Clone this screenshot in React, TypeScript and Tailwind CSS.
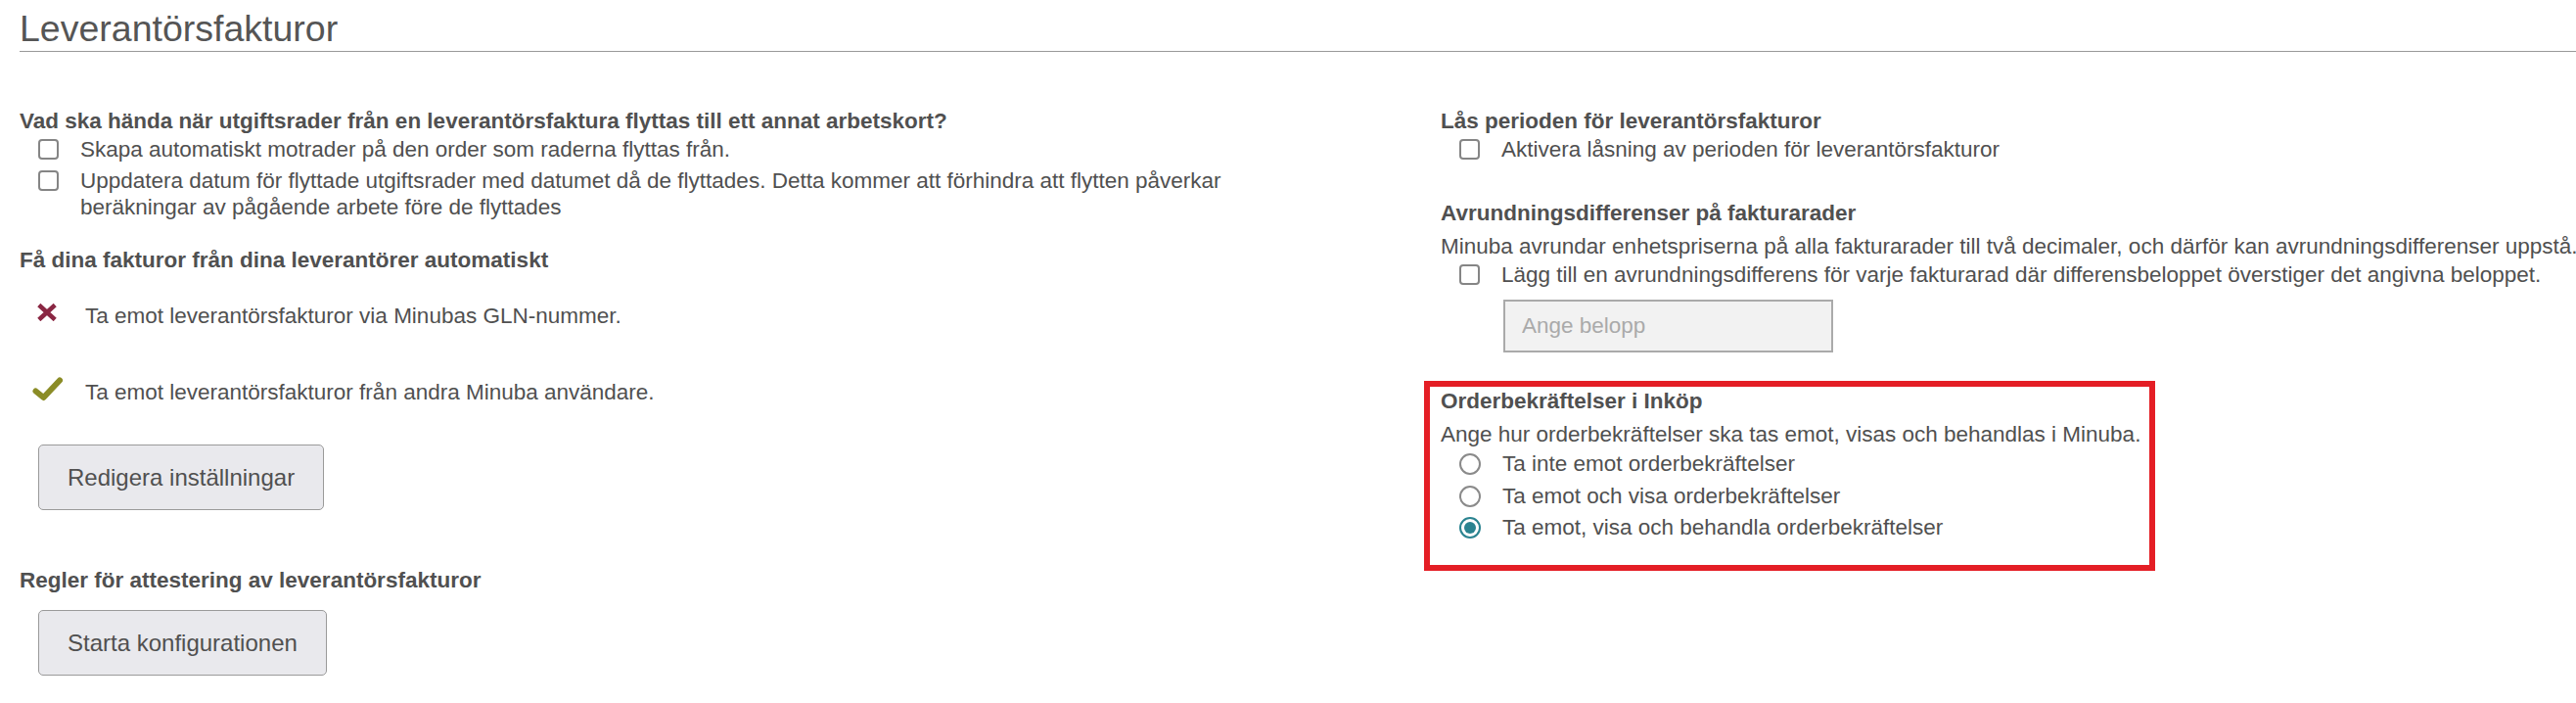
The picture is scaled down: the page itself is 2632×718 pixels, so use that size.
import type { ReactNode } from "react";

const Checkbox = () => (
  <span className="mt-[3px] ml-[19px] mr-[22px] h-[21px] w-[21px] shrink-0 rounded-[4px] border-2 border-[#858585] bg-white" />
);

const CheckRow = ({ children, className = "" }: { children: ReactNode; className?: string }) => (
  <div className={`flex items-start ${className}`}>
    <Checkbox />
    <span>{children}</span>
  </div>
);

const Radio = ({ checked }: { checked?: boolean }) =>
  checked ? (
    <span className="mt-[3px] ml-[19px] mr-[22px] flex h-[22px] w-[22px] shrink-0 items-center justify-center rounded-full border-2 border-[#2a8390] bg-white">
      <span className="h-[12px] w-[12px] rounded-full bg-[#2a8390]" />
    </span>
  ) : (
    <span className="mt-[3px] ml-[19px] mr-[22px] h-[22px] w-[22px] shrink-0 rounded-full border-2 border-[#8a8a8a] bg-white" />
  );

const RadioRow = ({ children, checked, className = "" }: { children: ReactNode; checked?: boolean; className?: string }) => (
  <div className={`flex items-start ${className}`}>
    <Radio checked={checked} />
    <span>{children}</span>
  </div>
);

const Heading = ({ children, className = "" }: { children: ReactNode; className?: string }) => (
  <div className={`font-bold ${className}`}>{children}</div>
);

const CrossIcon = () => (
  <svg width="20" height="18" viewBox="0 0 20 18">
    <path d="M1.8 1.5 L18.2 16.5 M18.2 1.5 L1.8 16.5" stroke="#8a2743" strokeWidth="4.6" strokeLinecap="butt" fill="none" />
  </svg>
);

const CheckIcon = () => (
  <svg width="31" height="24" viewBox="0 0 31 24" className="overflow-visible">
    <path d="M3.5 14.5 L11.5 21 L28 3.5" stroke="#8b8c26" strokeWidth="6" strokeLinecap="round" strokeLinejoin="round" fill="none" />
  </svg>
);

const StatusRow = ({ ok, children, className = "" }: { ok?: boolean; children: ReactNode; className?: string }) => (
  <div className={`flex items-start ${className}`}>
    <span className="ml-[12px] mr-[23px] flex h-[20px] w-[32px] shrink-0 items-center justify-center">
      {ok ? <CheckIcon /> : <CrossIcon />}
    </span>
    <span>{children}</span>
  </div>
);

const GrayButton = ({ children, className = "" }: { children: ReactNode; className?: string }) => (
  <button
    type="button"
    className={`ml-[19px] flex h-[67px] items-center self-start rounded-[5px] border border-[#9a9a9a] bg-[#e9e9ed] px-[29px] text-[24px] text-[#505050] ${className}`}
  >
    {children}
  </button>
);

const App = () => {
  return (
    <div className="h-[718px] w-full overflow-hidden bg-white font-['Liberation_Sans',Arial,sans-serif] text-[22.5px] leading-[27px] text-[#505050]">
      <h1 className="ml-5 border-b border-[#9a9a9a] pt-[11px] pb-[3px] text-[37.5px] leading-[37.5px] font-normal text-[#555]">
        Leverantörsfakturor
      </h1>

      <div className="flex pl-5 pt-[57px]">
        <div className="flex w-[1310px] shrink-0 flex-col">
          <Heading>Vad ska hända när utgiftsrader från en leverantörsfaktura flyttas till ett annat arbetskort?</Heading>
          <CheckRow className="mt-[2px]">Skapa automatiskt motrader på den order som raderna flyttas från.</CheckRow>
          <CheckRow className="mt-[5px]">
            Uppdatera datum för flyttade utgiftsrader med datumet då de flyttades. Detta kommer att förhindra att flytten påverkar beräkningar av pågående arbete före de flyttades
          </CheckRow>

          <Heading className="mt-[27px]">Få dina fakturor från dina leverantörer automatiskt</Heading>
          <StatusRow className="mt-[30px]">Ta emot leverantörsfakturor via Minubas GLN-nummer.</StatusRow>
          <StatusRow ok className="mt-[51px]">Ta emot leverantörsfakturor från andra Minuba användare.</StatusRow>

          <GrayButton className="mt-[40px]">Redigera inställningar</GrayButton>

          <Heading className="mt-[58px]">Regler för attestering av leverantörsfakturor</Heading>
          <GrayButton className="mt-[17px]">Starta konfigurationen</GrayButton>
        </div>

        <div className="ml-[142px] flex flex-col whitespace-nowrap">
          <Heading>Lås perioden för leverantörsfakturor</Heading>
          <CheckRow className="mt-[2px]">Aktivera låsning av perioden för leverantörsfakturor</CheckRow>

          <Heading className="mt-[38px]">Avrundningsdifferenser på fakturarader</Heading>
          <div className="mt-[7px]">
            Minuba avrundar enhetspriserna på alla fakturarader till två decimaler, och därför kan avrundningsdifferenser uppstå.
          </div>
          <CheckRow className="mt-[2px]">
            Lägg till en avrundningsdifferens för varje fakturarad där differensbeloppet överstiger det angivna beloppet.
          </CheckRow>
          <input
            type="text"
            placeholder="Ange belopp"
            className="mt-[12px] ml-[64px] h-[54px] w-[337px] border-2 border-[#aaaaaa] bg-[#f2f2f2] pl-[17px] text-[22.5px] outline-none placeholder:text-[#aaaaaa]"
          />

          <div className="mt-[29px] -ml-[17px] w-[747px] border-[6px] border-[#e41e25] pt-[1px] pb-[25px] pl-[11px]">
            <Heading>Orderbekräftelser i Inköp</Heading>
            <div className="mt-[7px]">Ange hur orderbekräftelser ska tas emot, visas och behandlas i Minuba.</div>
            <RadioRow className="mt-[3px]">Ta inte emot orderbekräftelser</RadioRow>
            <RadioRow className="mt-[6px]">Ta emot och visa orderbekräftelser</RadioRow>
            <RadioRow checked className="mt-[5px]">Ta emot, visa och behandla orderbekräftelser</RadioRow>
          </div>
        </div>
      </div>
    </div>
  );
};

export default App;
